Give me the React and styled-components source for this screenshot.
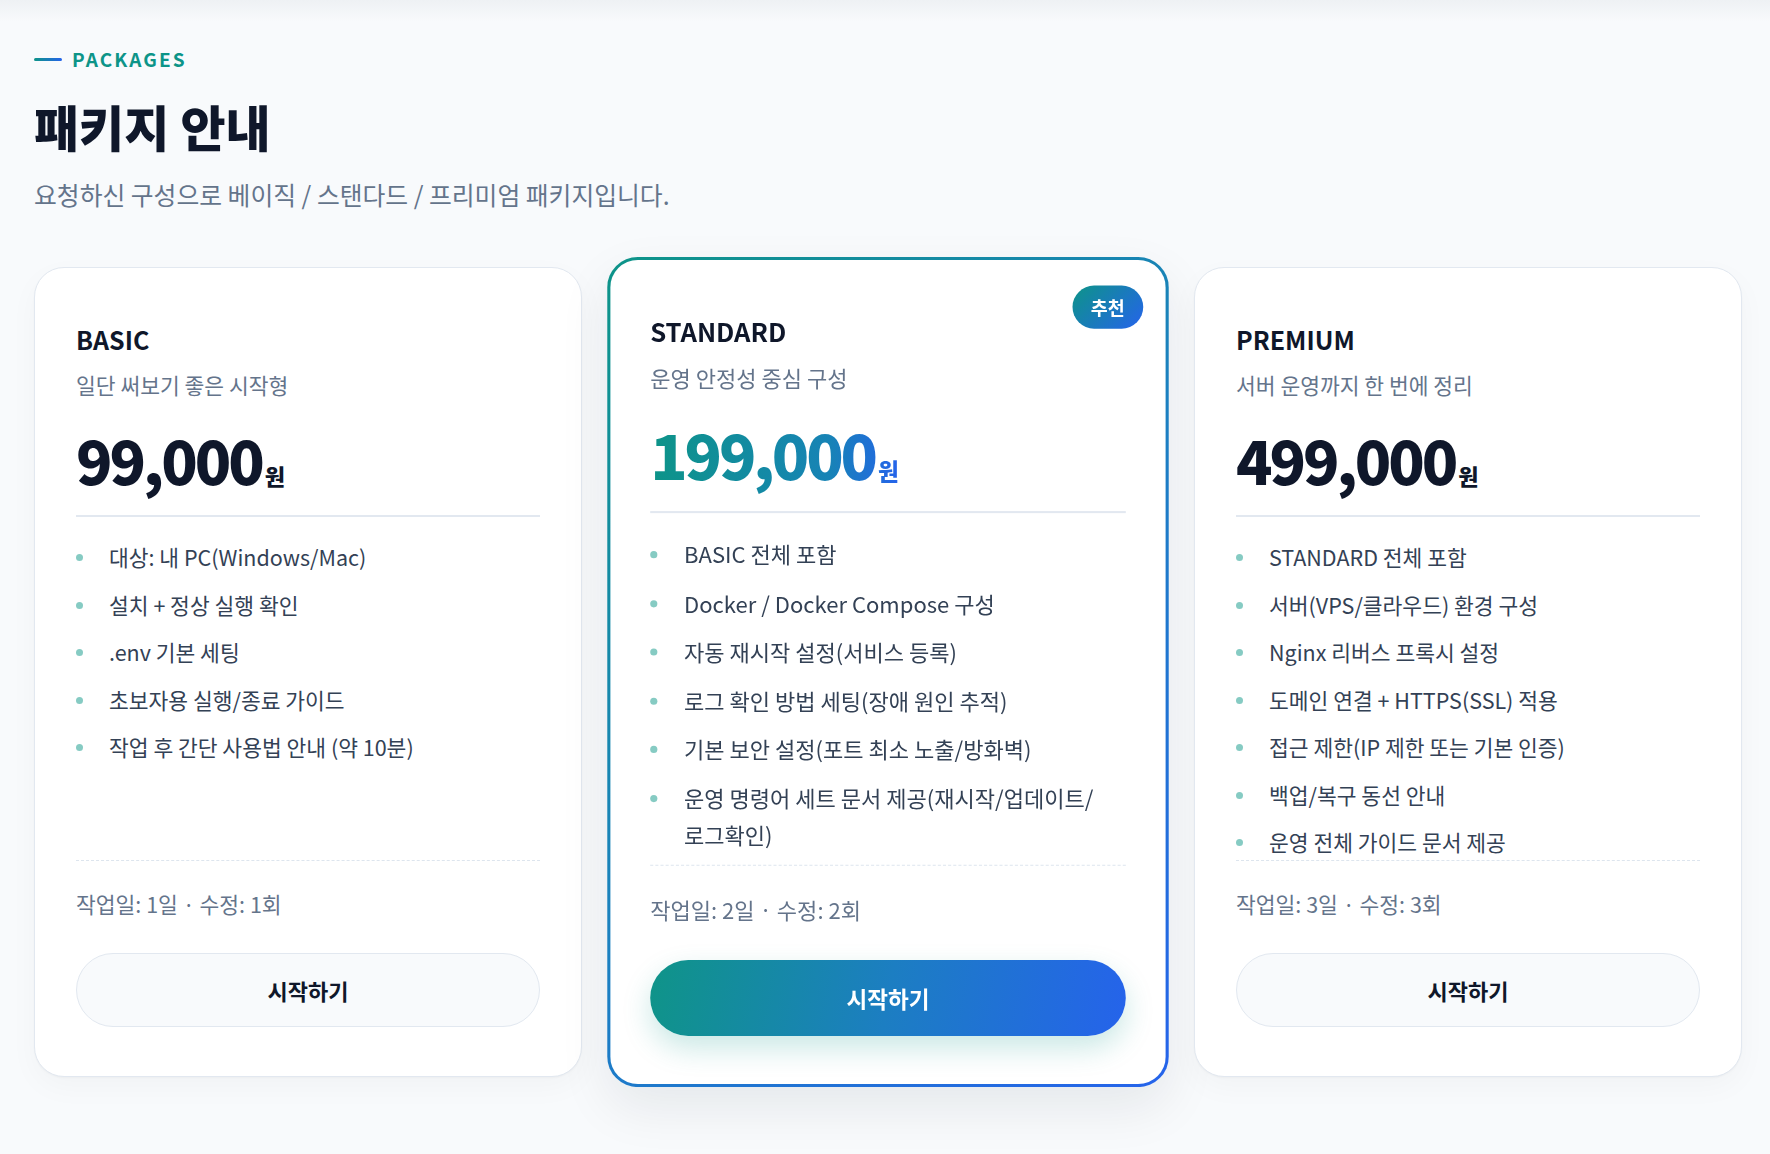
import React from 'react';
import styled, { createGlobalStyle, css } from 'styled-components';

const GlobalStyle = createGlobalStyle`
  html, body {
    margin: 0;
    padding: 0;
    background: #f8fafc;
  }
  body {
    font-family: "Noto Sans CJK KR", "Noto Sans", sans-serif;
    color: #0f172a;
  }
  * {
    box-sizing: border-box;
  }
`;

const brand = 'linear-gradient(90deg, #0d9488 0%, #2563eb 100%)';

const packages = [
  {
    name: 'BASIC',
    tagline: '일단 써보기 좋은 시작형',
    price: '99,000',
    features: [
      '대상: 내 PC(Windows/Mac)',
      '설치 + 정상 실행 확인',
      '.env 기본 세팅',
      '초보자용 실행/종료 가이드',
      '작업 후 간단 사용법 안내 (약 10분)',
    ],
    meta: '작업일: 1일 · 수정: 1회',
  },
  {
    name: 'STANDARD',
    tagline: '운영 안정성 중심 구성',
    price: '199,000',
    featured: true,
    features: [
      'BASIC 전체 포함',
      'Docker / Docker Compose 구성',
      '자동 재시작 설정(서비스 등록)',
      '로그 확인 방법 세팅(장애 원인 추적)',
      '기본 보안 설정(포트 최소 노출/방화벽)',
      '운영 명령어 세트 문서 제공(재시작/업데이트/ 로그확인)',
    ],
    meta: '작업일: 2일 · 수정: 2회',
  },
  {
    name: 'PREMIUM',
    tagline: '서버 운영까지 한 번에 정리',
    price: '499,000',
    features: [
      'STANDARD 전체 포함',
      '서버(VPS/클라우드) 환경 구성',
      'Nginx 리버스 프록시 설정',
      '도메인 연결 + HTTPS(SSL) 적용',
      '접근 제한(IP 제한 또는 기본 인증)',
      '백업/복구 동선 안내',
      '운영 전체 가이드 문서 제공',
    ],
    meta: '작업일: 3일 · 수정: 3회',
  },
];

function Packages({ className }) {
  return (
    <section className={className}>
      <Eyebrow>PACKAGES</Eyebrow>
      <Title>패키지 안내</Title>
      <Lead>요청하신 구성으로 베이직 / 스탠다드 / 프리미엄 패키지입니다.</Lead>

      <CardGrid>
        {packages.map((p) => (
          <Card key={p.name} $featured={p.featured}>
            {p.featured && <Badge>추천</Badge>}
            <Name>{p.name}</Name>
            <Tagline>{p.tagline}</Tagline>
            <PriceRow>
              <Price $featured={p.featured}>
                {p.price}
                <Won>원</Won>
              </Price>
            </PriceRow>
            <FeatureList>
              {p.features.map((f) => (
                <Feature key={f}>{f}</Feature>
              ))}
            </FeatureList>
            <Meta>{p.meta}</Meta>
            <StartButton $featured={p.featured}>시작하기</StartButton>
          </Card>
        ))}
      </CardGrid>
    </section>
  );
}

const Eyebrow = styled.div`
  display: flex;
  align-items: center;
  gap: 10px;
  font-size: 19px;
  line-height: 24px;
  font-weight: 700;
  letter-spacing: 0.11em;
  color: #0d9488;

  &::before {
    content: '';
    width: 28px;
    height: 3px;
    border-radius: 2px;
    background: ${brand};
  }
`;

const Title = styled.h1`
  margin: 24px 0 0;
  font-size: 49px;
  line-height: 1.25;
  font-weight: 900;
  letter-spacing: 0;
  color: #0f172a;
`;

const Lead = styled.p`
  margin: 20px 0 0;
  font-size: 24.8px;
  line-height: 1.5;
  color: #64748b;
`;

const CardGrid = styled.div`
  display: grid;
  grid-template-columns: repeat(3, 1fr);
  gap: 32px;
  margin-top: 54px;
  align-items: stretch;
`;

const Card = styled.article`
  position: relative;
  display: flex;
  flex-direction: column;
  padding: 54px 41px 49px;
  border-radius: 30px;
  background: #ffffff;
  border: 1px solid #e2e8f0;
  box-shadow: 0 1px 2px rgba(15, 23, 42, 0.03), 0 10px 30px rgba(15, 23, 42, 0.03);

  ${({ $featured }) =>
    $featured &&
    css`
      border: 3px solid transparent;
      padding: 52px 39px 47px;
      background: linear-gradient(#fff, #fff) padding-box,
        linear-gradient(135deg, #0d9488 0%, #1b80c0 50%, #2563eb 100%) border-box;
      transform: scale(1.025);
      box-shadow: 0 20px 50px rgba(15, 23, 42, 0.08);
    `}
`;

const Badge = styled.span`
  position: absolute;
  top: 25px;
  right: 22px;
  padding: 0 18px;
  height: 42px;
  display: flex;
  align-items: center;
  border-radius: 999px;
  background: linear-gradient(135deg, #0d9488 0%, #2563eb 100%);
  color: #fff;
  font-size: 18px;
  font-weight: 700;
`;

const Name = styled.h2`
  margin: 0;
  font-size: 25px;
  line-height: 34px;
  font-weight: 700;
  color: #0f172a;
`;

const Tagline = styled.p`
  margin: 14px 0 0;
  font-size: 21.5px;
  line-height: 30px;
  color: #64748b;
`;

const PriceRow = styled.div`
  margin-top: 22px;
  padding-bottom: 3px;
  border-bottom: 2px solid #e2e8f0;
`;

const Price = styled.div`
  display: inline-flex;
  align-items: baseline;
  font-size: 60px;
  line-height: 74px;
  font-weight: 900;
  letter-spacing: -0.05em;
  color: #0f172a;

  ${({ $featured }) =>
    $featured &&
    css`
      background: linear-gradient(90deg, #0d9488 0%, #1783b6 72%, #2563eb 100%);
      -webkit-background-clip: text;
      background-clip: text;
      color: transparent;
    `}
`;

const Won = styled.span`
  margin-left: 3px;
  font-size: 22px;
  font-weight: 800;
  letter-spacing: 0;
`;

const FeatureList = styled.ul`
  flex: 1;
  list-style: none;
  margin: 22px 0 0;
  padding: 0;
  display: flex;
  flex-direction: column;
  gap: 11.5px;
`;

const Feature = styled.li`
  display: flex;
  align-items: flex-start;
  gap: 26px;
  font-size: 21.5px;
  line-height: 36px;
  color: #334155;
  word-break: keep-all;

  &::before {
    content: '';
    flex: none;
    width: 7px;
    height: 7px;
    margin-top: 15px;
    border-radius: 50%;
    background: #86cbc3;
  }
`;

const Meta = styled.div`
  padding-top: 28px;
  border-top: 1px dashed #dde5ee;
  font-size: 21.5px;
  line-height: 30px;
  color: #64748b;
`;

const StartButton = styled.button`
  margin-top: 34px;
  height: 74px;
  width: 100%;
  border-radius: 999px;
  border: 1px solid #e2e8f0;
  background: #f8fafc;
  font-family: inherit;
  font-size: 22px;
  font-weight: 700;
  color: #0f172a;
  cursor: pointer;

  ${({ $featured }) =>
    $featured &&
    css`
      border: none;
      background: linear-gradient(100deg, #0f9488 0%, #1c7ec2 50%, #2563eb 100%);
      color: #fff;
      box-shadow: 0 12px 28px rgba(13, 148, 136, 0.22);
    `}
`;

const StyledPackages = styled(Packages)`
  min-height: 100vh;
  padding: 47px 28px 60px 34px;
  background: linear-gradient(180deg, #eef1f4 0px, #f8fafc 22px, #f8fafc 100%);
`;

export default function App() {
  return (
    <>
      <GlobalStyle />
      <StyledPackages />
    </>
  );
}
